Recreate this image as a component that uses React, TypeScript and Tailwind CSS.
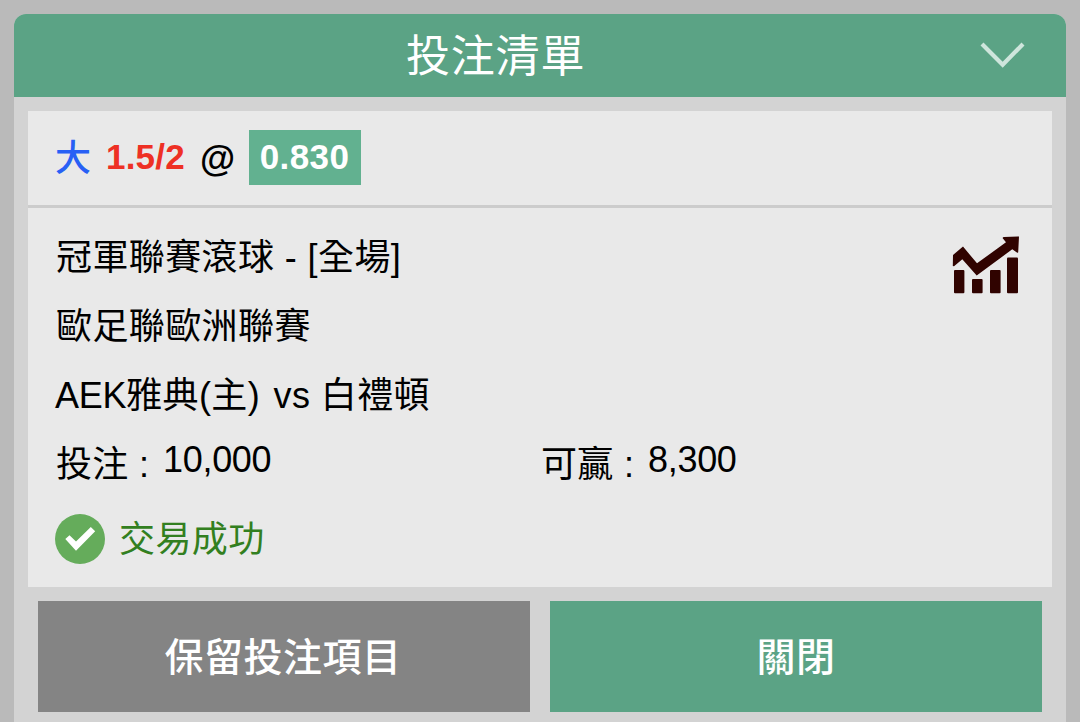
import { ReactNode } from 'react'

interface InfoLineProps {
  children: ReactNode
}

interface AmountProps {
  label: string
  value: string
}

function InfoLine({ children }: InfoLineProps) {
  return <p className="h-[69px] leading-[69px] text-[36px] tracking-[0.4px] whitespace-nowrap">{children}</p>
}

function Amount({ label, value }: AmountProps) {
  return (
    <div className="flex text-[36px] leading-[69px] whitespace-nowrap">
      <span className="w-[107px] tracking-[0.3px]">{label} :</span>
      <span className="leading-[59px] tracking-[-0.3px]">{value}</span>
    </div>
  )
}

function ChartIcon() {
  return (
    <svg width="70" height="60" viewBox="0 0 70 60" fill="#300300">
      <rect x="3" y="34" width="10.4" height="23.3" rx="1" />
      <rect x="21" y="43" width="10.6" height="14.3" rx="1" />
      <rect x="39" y="34" width="10.6" height="23.3" rx="1" />
      <rect x="56" y="21.6" width="11" height="35.7" rx="1" />
      <path d="M2 19L12 10.6L26 27.3L55 6.3L51.7 2.3Q51.5 1.2 53 1L68 0.4L67.2 16.2Q66.5 17.3 65.5 16.3L61.3 13.3L25.7 39.4L11.3 23.3L3 30.2L1.8 30Z" />
    </svg>
  )
}

export default function App() {
  return (
    <div className="w-[1080px] h-[722px] overflow-hidden bg-[#bababa] px-[14px] pt-[14px] text-black font-['Liberation_Sans','Noto_Sans_CJK_TC',sans-serif]">
      <div className="h-[708px] rounded-t-[12px] overflow-hidden bg-[#d3d3d3]">
        <header className="h-[83px] flex items-center bg-[#5ba385] text-white pl-[392px] pr-[41px]">
          <h1 className="text-[44px] leading-[83px] tracking-[0.8px] pt-px">投注清單</h1>
          <svg className="ml-auto" width="46" height="27" viewBox="0 0 46 27" fill="none" stroke="#cee5dc" strokeWidth="4.2">
            <path d="M3 2L23.7 22.7L44 2" />
          </svg>
        </header>

        <section className="mt-[14px] mx-[14px] h-[476px] bg-[#e9e9e9]">
          <div className="h-[97px] flex items-start pl-[28px] border-b-3 border-[#cccccc] font-bold text-[36px] leading-[54px] pt-[19px]">
            <span className="w-[50px] pt-[2px] -ml-px mr-px font-medium text-[#2860f5]">大</span>
            <span className="w-[94px] text-[35px] tracking-[0.2px] text-[#ee3024]">1.5/2</span>
            <span className="w-[49px] pt-[2px]">@</span>
            <span className="w-[112px] h-[55px] pr-px text-center text-[35px] tracking-[0.4px] bg-[#62b190] text-white">0.830</span>
          </div>
          <div className="flex pl-[28px] pt-[15px]">
            <div className="w-[895px]">
              <InfoLine>冠軍聯賽滾球 - [全場]</InfoLine>
              <InfoLine>歐足聯歐洲聯賽</InfoLine>
              <InfoLine>
                <span className="-ml-px tracking-[-0.3px]">AEK</span>雅典(主)<span className="ml-[3px]"> vs</span> 白禮頓
              </InfoLine>
              <div className="grid grid-cols-[485px_auto] h-[69px]">
                <Amount label="投注" value="10,000" />
                <Amount label="可贏" value="8,300" />
              </div>
              <div className="-ml-px flex items-center h-[80px] gap-[14px] text-[36px] tracking-[0.4px] text-[#327f20]">
                <svg width="50" height="50" viewBox="0 0 50 50">
                  <circle cx="25" cy="25" r="25" fill="#65ac5b" />
                  <path d="M10.3 25L14.5 21.2L21 27.6L35.8 13L40.2 17.3L21 36.8Z" fill="white" />
                </svg>
                <span className="pt-px">交易成功</span>
              </div>
            </div>
            <div className="pt-[13px]">
              <ChartIcon />
            </div>
          </div>
        </section>

        <div className="flex gap-[20px] px-[24px] pt-[14px] text-white text-[39px] tracking-[0.5px] font-medium">
          <button className="w-[492px] h-[111px] pt-[3px] pr-[2px] bg-[#848484]">保留投注項目</button>
          <button className="w-[492px] h-[111px] pt-[3px] bg-[#5ba385]">關閉</button>
        </div>
      </div>
    </div>
  )
}
